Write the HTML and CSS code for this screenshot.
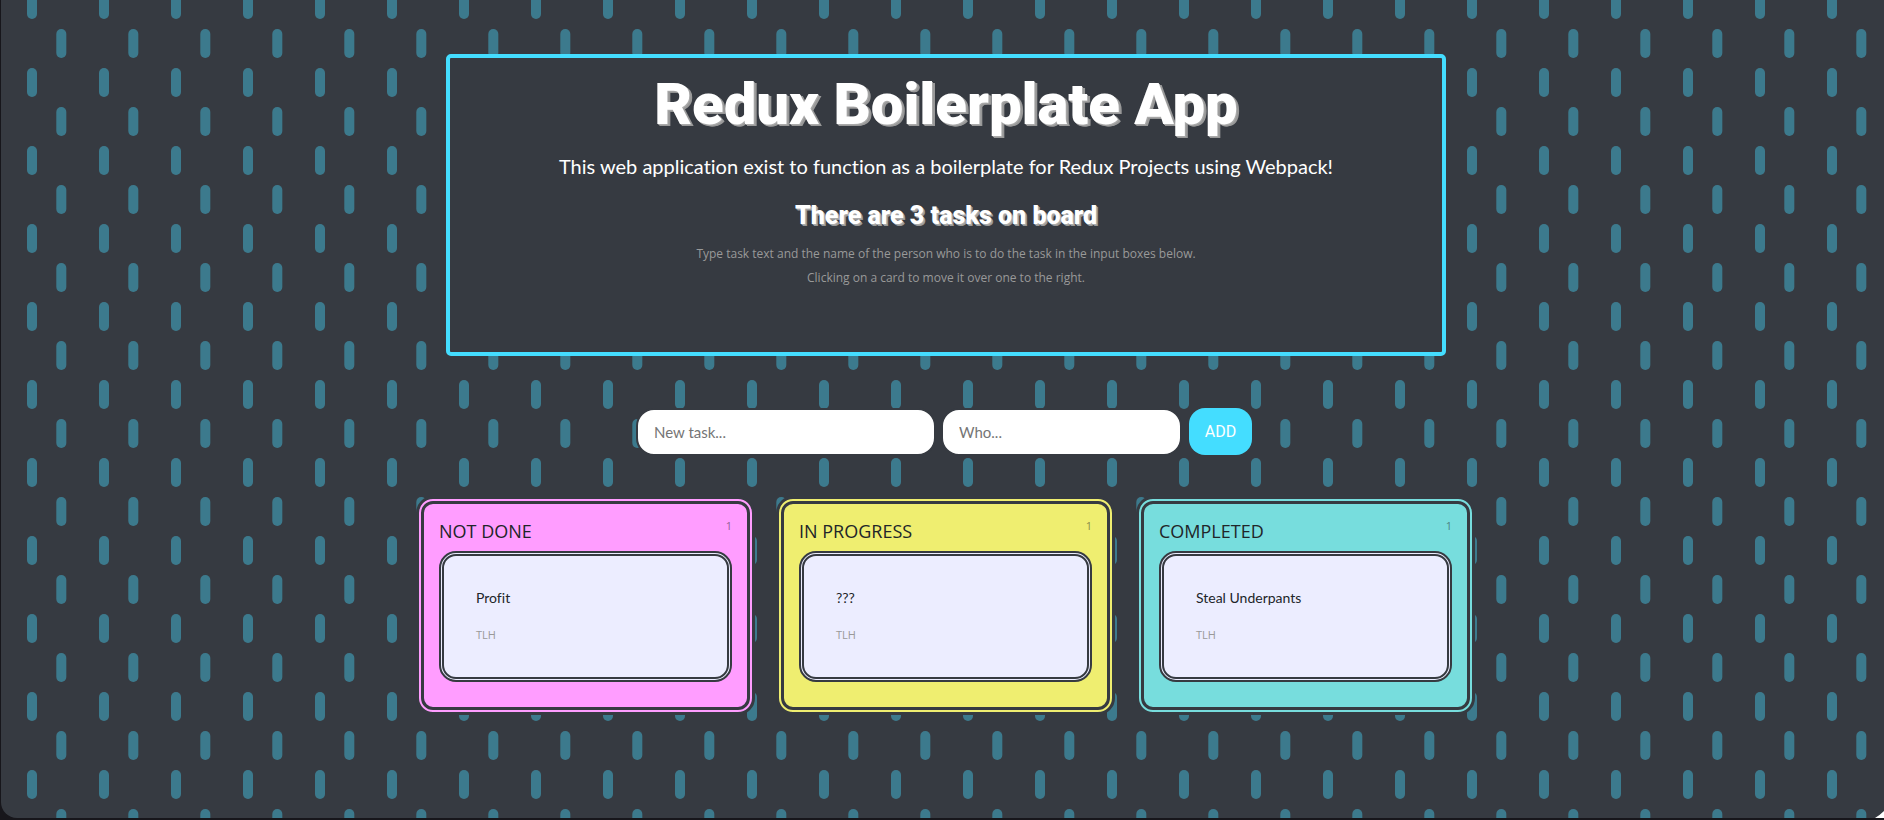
FILE: index.html
```html
<!DOCTYPE html>
<html lang="en">
<head>
<meta charset="utf-8">
<title>Redux Boilerplate App</title>
<link rel="stylesheet" href="styles.css">
</head>
<body>
<div class="app">
  <header class="banner">
    <h1 class="banner-title">Redux Boilerplate App</h1>
    <p class="banner-intro">This web application exist to function as a boilerplate for Redux Projects using Webpack!</p>
    <h2 class="banner-count">There are 3 tasks on board</h2>
    <p class="banner-help">Type task text and the name of the person who is to do the task in the input boxes below.</p>
    <p class="banner-help">Clicking on a card to move it over one to the right.</p>
  </header>

  <form class="task-form">
    <input class="field field-task" type="text" placeholder="New task..." aria-label="New task">
    <input class="field field-who" type="text" placeholder="Who..." aria-label="Who">
    <button class="add" type="button">ADD</button>
  </form>

  <main class="board">
    <section class="column column-todo">
      <div class="column-head"><h3 class="column-title">NOT DONE</h3><span class="column-count">1</span></div>
      <article class="card"><p class="card-task">Profit</p><p class="card-who">TLH</p></article>
    </section>
    <section class="column column-progress">
      <div class="column-head"><h3 class="column-title">IN PROGRESS</h3><span class="column-count">1</span></div>
      <article class="card"><p class="card-task">???</p><p class="card-who">TLH</p></article>
    </section>
    <section class="column column-done">
      <div class="column-head"><h3 class="column-title">COMPLETED</h3><span class="column-count">1</span></div>
      <article class="card"><p class="card-task">Steal Underpants</p><p class="card-who">TLH</p></article>
    </section>
  </main>
</div>
<svg class="corner" width="9" height="7" viewBox="0 0 9 7" aria-hidden="true"><path d="M9 0Q5 4 0 7H9Z" fill="#fff"/></svg>
</body>
</html>
```
FILE: styles.css
```css
* { box-sizing: border-box; }

body {
  margin: 0;
  min-height: 100vh;
  padding: 0 0 2px 1px;
  display: flex;
  background: #17161b;
  color: #212529;
  font-family: "Open Sans", "Noto Sans", sans-serif;
  font-variant-ligatures: none;
}

h1, h2, h3, p { margin: 0; }

.app {
  flex: 1;
  padding: 54px 0 40px 7px;
  border-bottom-left-radius: 16px;
  background-color: #363a41;
  background-image: url("data:image/svg+xml,%3Csvg xmlns='http://www.w3.org/2000/svg' width='72' height='78'%3E%3Cg fill='%233c7a8d'%3E%3Crect x='26' y='-10' width='10' height='29' rx='5'/%3E%3Crect x='26' y='68' width='10' height='29' rx='5'/%3E%3Crect x='55.3' y='29' width='10' height='29' rx='5'/%3E%3C/g%3E%3C/svg%3E");
  display: flex;
  flex-direction: column;
  align-items: center;
}

.banner {
  width: 100%;
  max-width: 1000px;
  min-height: 302px;
  padding: 4px 16px;
  border: 4px solid #44ddff;
  border-radius: 5px;
  background: #363a41;
  color: #fff;
  text-align: center;
}

.banner-title {
  font-family: Roboto, sans-serif;
  font-size: 58px;
  font-weight: 900;
  line-height: 84px;
  text-shadow: 1px 1px #aaa, 2px 2px #999, 3px 2px #999;
}

.banner-intro {
  margin-top: 3px;
  font-family: Lato, sans-serif;
  font-size: 20px;
  line-height: 34px;
}

.banner-count {
  margin: 15px 0 12px;
  font-family: Roboto, sans-serif;
  font-size: 25px;
  font-weight: 900;
  line-height: 36px;
  text-shadow: 1px 1px #aaa, 2px 2px #999;
}

.banner-help {
  margin-bottom: 8px;
  font-size: 12px;
  line-height: 16px;
  color: #999;
}

.task-form {
  display: flex;
  align-items: flex-start;
  gap: 5px;
  margin-top: 52px;
  padding-right: 4px;
}

.field {
  height: 48px;
  padding: 0 16px;
  border: 2px solid #363a41;
  border-radius: 18px;
  background: #fff;
  font-family: Lato, sans-serif;
  font-size: 15px;
  color: #212529;
}

.field::placeholder { color: #757575; }
.field-task { width: 300px; }
.field-who { width: 241px; }

.add {
  width: 63px;
  height: 47px;
  margin-left: 2px;
  padding: 0;
  border: 0;
  border-radius: 16px;
  background: #44ddff;
  color: #fff;
  font-family: Roboto, sans-serif;
  font-size: 16px;
}

.board {
  width: 100%;
  max-width: 1060px;
  display: grid;
  grid-template-columns: repeat(3, 339px);
  gap: 21px;
  margin-top: 40px;
}

.column {
  padding: 15px 15px 25px;
  border: 8px double #363a41;
  border-radius: 17px;
}

.column-todo { background-color: #ff9dff; }
.column-progress { background-color: #efee70; }
.column-done { background-color: #77dddd; }

.column-head {
  display: flex;
  justify-content: space-between;
  height: 32px;
}

.column-title { font-size: 18px; font-weight: 500; line-height: 24px; }
.column-count { font-size: 11px; line-height: 14px; opacity: 0.5; }

.card {
  min-height: 131px;
  padding: 32px;
  border: 5px double #363a41;
  border-radius: 17px;
  background: #ecedff;
}

.card-task { font-family: Lato, sans-serif; font-size: 14px; line-height: 20px; }
.card-who { margin-top: 19px; font-size: 11px; line-height: 16px; color: #999; }

.corner { position: absolute; right: 0; bottom: 2px; }
```
